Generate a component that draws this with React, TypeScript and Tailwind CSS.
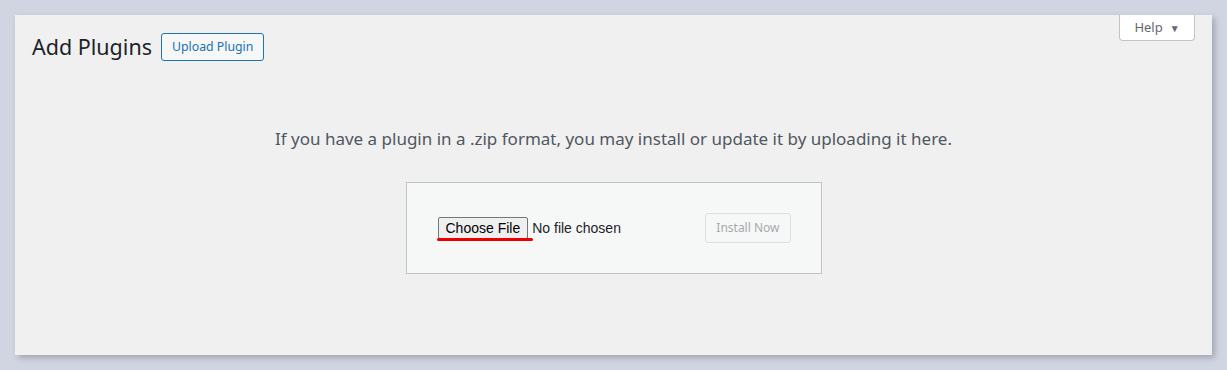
const App = () => {
    return (
        <div className="min-h-[370px] w-full bg-[#d0d5e1] pl-[15px] pr-[15px] pt-[15px]" style={{ fontFamily: '"Noto Sans", "Open Sans", sans-serif' }}>
            {/* Main panel */}
            <div className="flex h-[340px] w-[1197px] flex-col bg-[#f0f0f1] shadow-[3px_3px_6px_rgba(0,0,0,0.22)]">
                {/* Header row */}
                <div className="flex items-start justify-between">
                    <div className="ml-[17px] mt-[18px] flex items-center gap-[9px]">
                        <h1 className="text-[21.5px] leading-[28px] font-normal text-[#1d2327]">Add Plugins</h1>
                        <button className="h-[28px] rounded-[3px] border border-[#2271b1] bg-[#f6f7f7] px-[10px] text-[12.3px] text-[#2271b1]">
                            Upload Plugin
                        </button>
                    </div>
                    <button className="mr-[17px] flex h-[26px] w-[76px] items-center justify-center gap-[7px] rounded-b-[4px] border border-t-0 border-[#c3c4c7] bg-white text-[13px] text-[#646970]">
                        Help
                        <span className="text-[10px] leading-none">▼</span>
                    </button>
                </div>

                {/* Description */}
                <p className="mt-[66px] text-center text-[17px] leading-[24px] text-[#50575e]">
                    If you have a plugin in a .zip format, you may install or update it by uploading it here.
                </p>

                {/* Upload box */}
                <div className="mx-auto mt-[31px] flex h-[92px] w-[416px] items-center justify-between border border-[#c3c4c7] bg-[#f6f7f7] pl-[31px] pr-[30px]">
                    <div className="flex items-center gap-[4px]" style={{ fontFamily: '"Liberation Sans", Arial, sans-serif' }}>
                        <div className="relative">
                            <button className="h-[22px] rounded-[2px] border border-[#767676] bg-[#efefef] px-[7px] text-[14px] leading-none text-black">
                                Choose File
                            </button>
                            <span className="absolute left-[-1px] top-[22px] h-[3px] w-[96px] rounded-full bg-[#ee0000]" />
                        </div>
                        <span className="text-[14px] text-[#1d2327]">No file chosen</span>
                    </div>
                    <button className="h-[30px] rounded-[3px] border border-[#dcdcde] bg-[#f6f7f7] px-[10px] text-[12px] text-[#a7aaad]">
                        Install Now
                    </button>
                </div>
            </div>
        </div>
    );
};

export default App;
